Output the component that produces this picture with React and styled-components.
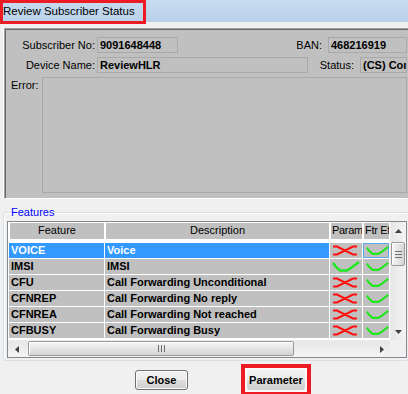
import styled, { createGlobalStyle } from 'styled-components';

const GlobalStyle = createGlobalStyle`
  html, body { margin: 0; padding: 0; background: #f0f0f0; }
  * { box-sizing: border-box; }
`;

const Window = styled.div`
  width: 408px;
  height: 394px;
  overflow: hidden;
  background: #f0f0f0;
  font-family: "Liberation Sans", Arial, sans-serif;
  font-size: 11px;
  color: #000;
`;

const TitleBar = styled.div`
  height: 22px;
  display: flex;
  align-items: flex-start;
  background: linear-gradient(#c8dbf0, #b9d1ea);
`;

/* red annotation box drawn over the caption */
const TitleMark = styled.div`
  position: relative;
  z-index: 1;
  width: 146px;
  height: 24px;
  border: 3px solid #ed1c24;
  padding-top: 1px;
  font-size: 11.5px;
  line-height: 14px;
  white-space: nowrap;
`;

const Body = styled.div`
  padding-top: 6px;
`;

const InfoPanel = styled.div`
  margin-left: 4px;
  width: 404px;
  background: #c0c0c0;
  border-top: 1px solid #a0a0a0;
  border-left: 1px solid #a0a0a0;
  border-bottom: 1px solid #fff;
  box-shadow: inset 1px 1px 0 #696969, -1px 0 0 #fff;
  padding: 8px 1px 5px 1px;
  display: flex;
  flex-direction: column;
  gap: 4px;
`;

const FieldRow = styled.div`
  display: flex;
  align-items: center;
  height: ${p => p.$h || 16}px;
`;

const Label = styled.span`
  flex: none;
  width: ${p => (p.$w ? `${p.$w}px` : 'auto')};
  margin-left: ${p => (p.$push ? 'auto' : '0')};
  padding-right: ${p => p.$gap ?? 2}px;
  padding-left: ${p => p.$indent || 0}px;
  text-align: ${p => (p.$left ? 'left' : 'right')};
  align-self: ${p => (p.$top ? 'flex-start' : 'center')};
  padding-top: ${p => (p.$top ? 2 : 0)}px;
  white-space: nowrap;
`;

const Field = styled.div`
  flex: none;
  width: ${p => p.$w}px;
  height: 16px;
  border: 1px solid #a9a9a9;
  padding: 0 2px;
  font-weight: bold;
  line-height: 14px;
  white-space: nowrap;
  overflow: hidden;
`;

const ErrorBox = styled.div`
  flex: 1;
  height: 116px;
  border: 1px solid #a8a8a8;
`;

const FeatureGroup = styled.fieldset`
  margin: 7px 0 0 3px;
  width: 406px;
  min-width: 0;
  padding: 2px 1px 2px 3px;
  border: 1px solid #d5dfe5;
  border-radius: 3px;
  box-shadow: inset 1px 1px 0 #fff;
`;

const Legend = styled.legend`
  margin-left: 3px;
  padding: 0 1px;
  color: #0000ff;
  font-size: 11px;
  line-height: 13px;
`;

const TableFrame = styled.div`
  width: 400px;
  border: 1px solid #828790;
  background: #fff;
  display: grid;
  grid-template-columns: 382px 16px;
  grid-template-rows: 118px 17px;
`;

const DataGrid = styled.div`
  padding-left: 1px;
  display: grid;
  grid-template-columns: 95px 224px 32px 26px;
  grid-template-rows: 20px repeat(6, 15px);
  column-gap: 1px;
  row-gap: 1px;
  align-content: start;
`;

const HeadCell = styled.div`
  height: 17px;
  background: #c0c0c0;
  border-top: 1px solid #fff;
  border-left: 1px solid #fff;
  line-height: 15px;
  text-align: ${p => (p.$left ? 'left' : 'center')};
  padding-left: ${p => (p.$left ? 1 : 0)}px;
  letter-spacing: ${p => (p.$left ? '-0.3px' : '0')};
  white-space: nowrap;
  overflow: hidden;
`;

const Cell = styled.div`
  background: ${p => (p.$selected ? '#3399ff' : '#c0c0c0')};
  color: ${p => (p.$selected ? '#fff' : '#000')};
  font-weight: bold;
  line-height: 15px;
  padding-left: 2px;
  white-space: nowrap;
  overflow: hidden;
`;

const IconCell = styled.div`
  background: #c0c0c0;
  display: flex;
  align-items: center;
  padding-left: ${p => p.$pad || 2}px;
  overflow: hidden;
  box-shadow: ${p => (p.$focus ? 'inset 0 0 0 1px #5aa7f0' : 'none')};
`;

const VScroll = styled.div`
  display: flex;
  flex-direction: column;
  background: linear-gradient(90deg, #e6e6e6, #f4f4f4);
  border-left: 1px solid #ececec;
`;

const HScroll = styled.div`
  display: flex;
  align-items: stretch;
  background: linear-gradient(#e6e6e6, #f4f4f4);
  border-top: 1px solid #ececec;
`;

const ArrowBtn = styled.div`
  flex: none;
  width: ${p => (p.$horiz ? 17 : 15)}px;
  height: ${p => (p.$horiz ? 16 : 17)}px;
  display: flex;
  align-items: center;
  justify-content: center;
`;

const Track = styled.div`
  flex: 1;
  display: flex;
  flex-direction: ${p => (p.$horiz ? 'row' : 'column')};
  padding: ${p => (p.$horiz ? '0 0 0 3px' : '3px 0 0 0')};
`;

const Thumb = styled.div`
  flex: none;
  ${p => (p.$horiz ? 'width: 266px; height: 15px;' : 'width: 14px; height: 24px;')}
  border: 1px solid #9a9a9a;
  border-radius: 2px;
  background: ${p =>
    p.$horiz
      ? 'linear-gradient(#f6f6f6, #e6e6e6 50%, #d4d4d4)'
      : 'linear-gradient(90deg, #f6f6f6, #e6e6e6 50%, #d4d4d4)'};
  box-shadow: inset 1px 1px 0 #fff;
  display: flex;
  align-items: center;
  justify-content: center;
`;

const Corner = styled.div`
  background: #f0f0f0;
`;

const ButtonBar = styled.div`
  display: flex;
  align-items: flex-start;
  gap: 53px;
  margin-top: 3px;
  padding-left: 135px;
`;

const Button = styled.button`
  height: 20px;
  width: ${p => p.$w}px;
  margin-top: ${p => p.$top || 0}px;
  padding: 0;
  font-family: inherit;
  font-size: 11px;
  font-weight: bold;
  color: #000;
  border: ${p => (p.$plain ? 'none' : '1px solid #707070')};
  border-radius: 3px;
  background: linear-gradient(#f2f2f2, #ebebeb 50%, #dddddd 50%, #cfcfcf);
  box-shadow: ${p => (p.$plain ? 'none' : 'inset 0 0 0 1px #fcfcfc')};
`;

/* red annotation box drawn round the Parameter button */
const MarkBox = styled.div`
  border: 4px solid #ed1c24;
  padding: 2px;
  background: #f8f8f8;
`;

const CrossIcon = () => (
  <svg width="26" height="11" viewBox="0 0 26 11">
    <path d="M1 1.5 L5 1.5 L13 5.5 L21 9.5 L25 9.5 M1 9.5 L5 9.5 L13 5.5 L21 1.5 L25 1.5" stroke="#ff1010" strokeWidth="2" fill="none" />
  </svg>
);

const CheckIcon = () => (
  <svg width="28" height="12" viewBox="0 0 28 12">
    <path d="M1 2 L4 6 L8 9.5 L15 9.5 L19 7 L23 4 L27 1" stroke="#1ee81e" strokeWidth="2.5" fill="none" />
  </svg>
);

const Arrow = ({ dir }) => {
  const pts = {
    up: '0,4 3.5,0 7,4',
    down: '0,0 3.5,4 7,0',
    left: '4,0 0,3.5 4,7',
    right: '0,0 4,3.5 0,7',
  }[dir];
  const horiz = dir === 'left' || dir === 'right';
  return (
    <svg width={horiz ? 4 : 7} height={horiz ? 7 : 4} viewBox={horiz ? '0 0 4 7' : '0 0 7 4'}>
      <polygon points={pts} fill="#404040" />
    </svg>
  );
};

const Grip = ({ horiz }) => (
  <svg width="7" height="7" viewBox="0 0 7 7">
    {[0, 3, 6].map(o =>
      horiz ? (
        <rect key={o} x={o} y="0" width="1" height="7" fill="#6e6e6e" />
      ) : (
        <rect key={o} x="0" y={o} width="7" height="1" fill="#6e6e6e" />
      )
    )}
  </svg>
);

const features = [
  { code: 'VOICE', desc: 'Voice', param: false, selected: true },
  { code: 'IMSI', desc: 'IMSI', param: true },
  { code: 'CFU', desc: 'Call Forwarding Unconditional', param: false },
  { code: 'CFNREP', desc: 'Call Forwarding No reply', param: false },
  { code: 'CFNREA', desc: 'Call Forwarding Not reached', param: false },
  { code: 'CFBUSY', desc: 'Call Forwarding Busy', param: false },
];

export default function App() {
  return (
    <>
      <GlobalStyle />
      <Window>
        <TitleBar>
          <TitleMark>Review Subscriber Status</TitleMark>
        </TitleBar>
        <Body>
          <InfoPanel>
            <FieldRow>
              <Label $w={91}>Subscriber No:</Label>
              <Field $w={81}>9091648448</Field>
              <Label $push $gap={6}>BAN:</Label>
              <Field $w={79}>468216919</Field>
            </FieldRow>
            <FieldRow>
              <Label $w={91}>Device Name:</Label>
              <Field $w={211}>ReviewHLR</Field>
              <Label $push $gap={6}>Status:</Label>
              <Field $w={47}>(CS) Connected</Field>
            </FieldRow>
            <FieldRow $h={116}>
              <Label $w={36} $left $top $indent={5}>Error:</Label>
              <ErrorBox />
            </FieldRow>
          </InfoPanel>

          <FeatureGroup>
            <Legend>Features</Legend>
            <TableFrame>
              <DataGrid>
                <HeadCell>Feature</HeadCell>
                <HeadCell>Description</HeadCell>
                <HeadCell $left>Param</HeadCell>
                <HeadCell $left>Ftr Ef</HeadCell>
                {features.map(f => [
                  <Cell key={f.code + 'c'} $selected={f.selected}>{f.code}</Cell>,
                  <Cell key={f.code + 'd'} $selected={f.selected}>{f.desc}</Cell>,
                  <IconCell key={f.code + 'p'}>{f.param ? <CheckIcon /> : <CrossIcon />}</IconCell>,
                  <IconCell key={f.code + 'f'} $pad={3} $focus={f.selected}><CheckIcon /></IconCell>,
                ])}
              </DataGrid>
              <VScroll>
                <ArrowBtn><Arrow dir="up" /></ArrowBtn>
                <Track>
                  <Thumb><Grip /></Thumb>
                </Track>
                <ArrowBtn><Arrow dir="down" /></ArrowBtn>
              </VScroll>
              <HScroll>
                <ArrowBtn $horiz><Arrow dir="left" /></ArrowBtn>
                <Track $horiz>
                  <Thumb $horiz><Grip horiz /></Thumb>
                </Track>
                <ArrowBtn $horiz><Arrow dir="right" /></ArrowBtn>
              </HScroll>
              <Corner />
            </TableFrame>
          </FeatureGroup>

          <ButtonBar>
            <Button $w={53} $top={6}>Close</Button>
            <MarkBox>
              <Button $w={58} $plain>Parameter</Button>
            </MarkBox>
          </ButtonBar>
        </Body>
      </Window>
    </>
  );
}
